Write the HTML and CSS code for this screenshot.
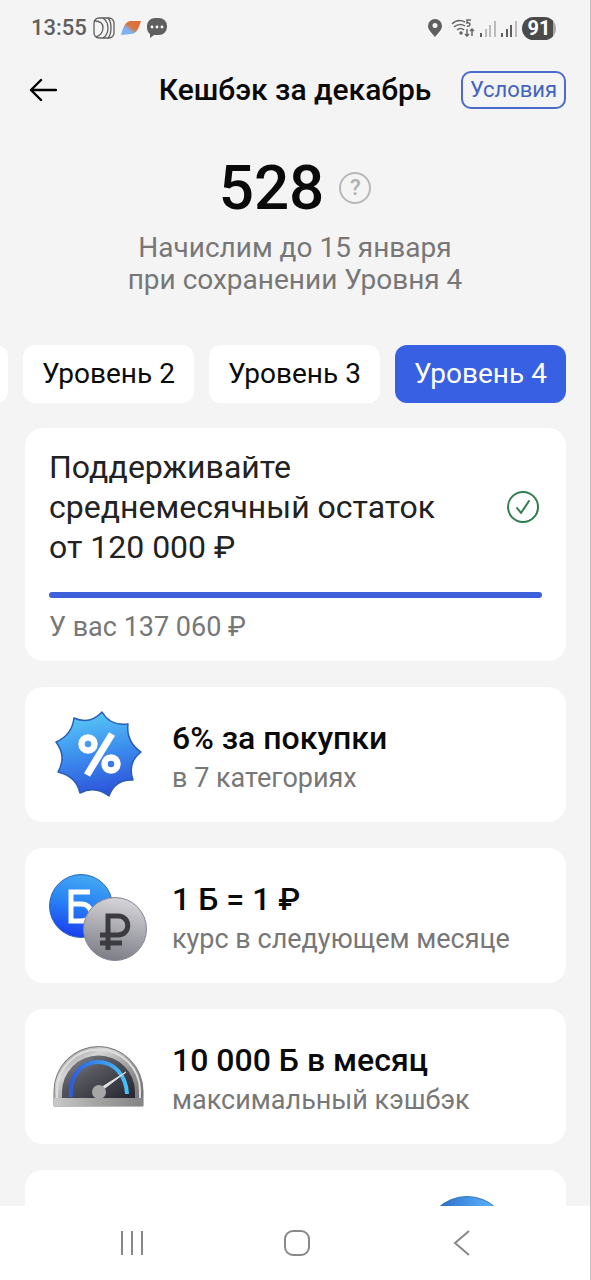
FILE: index.html
```
<!DOCTYPE html>
<html lang="ru">
<head>
    <meta charset="UTF-8">
    <meta name="viewport" content="width=device-width, initial-scale=1.0">
    <title>Кешбэк за декабрь</title>
    <link rel="stylesheet" href="styles.css">
</head>
<body>
    <div class="screen">
        <div class="status-bar">
            <div class="status-group">
                <span class="clock">13:55</span>
                <svg width="22" height="22" viewBox="0 0 22 22" fill="none" stroke="#5f5f5f" stroke-width="1.3">
                    <rect x="1" y="1" width="20" height="20" rx="5"/>
                    <path d="M2 4c6 0 8 3 8 7s-3 8-7 9M10 1c4 3 5 6 5 10s-2 8-5 10M15 1c3 3 3 6 3 10s-1 8-3 10"/>
                </svg>
                <svg width="20" height="14" viewBox="0 0 20 14">
                    <defs>
                        <linearGradient id="leaf" x1="0" y1="1" x2="1" y2="0">
                            <stop offset="0.35" stop-color="#7fb2f5"/>
                            <stop offset="0.55" stop-color="#d9763f"/>
                            <stop offset="1" stop-color="#e0693a"/>
                        </linearGradient>
                    </defs>
                    <path d="M0 14C2 7 4 0 10 0h10c-2 6-4 13-10 13z" fill="url(#leaf)"/>
                </svg>
                <svg width="20" height="20" viewBox="0 0 20 20">
                    <path d="M8 0h4a8 8 0 0 1 8 8v1a8 8 0 0 1-8 8H7l-4 3v-4a8 8 0 0 1-3-7V8a8 8 0 0 1 8-8z" fill="#5f5f5f"/>
                    <g fill="#fff"><circle cx="5" cy="9" r="1.4"/><circle cx="10" cy="9" r="1.4"/><circle cx="15" cy="9" r="1.4"/></g>
                </svg>
            </div>
            <div class="status-group status-right">
                <svg width="14" height="18" viewBox="0 0 14 18">
                    <path fill-rule="evenodd" d="M7 0a7 7 0 0 1 7 7c0 4-4 7-7 11C4 14 0 11 0 7a7 7 0 0 1 7-7zm0 4a2.5 2.5 0 1 0 0 5 2.5 2.5 0 0 0 0-5z" fill="#5f5f5f"/>
                </svg>
                <svg class="wifi" width="24" height="18" viewBox="0 0 24 18" fill="none" stroke="#666" stroke-width="1.5">
                    <path d="M1 5c4-4 9-4 13-2M3 8c3-3 8-3 11-1M6 11c2-2 5-2 7 0"/>
                    <circle cx="10" cy="14" r="1" fill="#666"/>
                    <path d="M20 1h-4v3c4-1 4 4 0 3M16 10v7m-2-2l2 2 2-2M21 17v-7m-2 2l2-2 2 2"/>
                </svg>
                <svg width="16" height="17" viewBox="0 0 16 17">
                    <path d="M0 13h2v4H0z" fill="#5f5f5f"/>
                    <path d="M5 9h2v8H5zM9 5h2v12H9zM14 1h2v16h-2z" fill="#bcbcbc"/>
                </svg>
                <svg width="16" height="17" viewBox="0 0 16 17">
                    <path d="M0 13h2v4H0zM5 9h2v8H5zM9 5h2v12H9z" fill="#5f5f5f"/>
                    <path d="M14 1h2v16h-2z" fill="#bcbcbc"/>
                </svg>
                <span class="battery">91</span>
            </div>
        </div>

        <header class="header">
            <button class="back" aria-label="Назад">
                <svg width="28" height="24" viewBox="0 0 28 24" fill="none" stroke="#000" stroke-width="2.4" stroke-linecap="round" stroke-linejoin="round">
                    <path d="M27 12H2M12 2L2 12l10 10"/>
                </svg>
            </button>
            <h1>Кешбэк за декабрь</h1>
            <button class="terms">Условия</button>
        </header>

        <main>
            <section class="summary">
                <div class="amount">
                    <span class="amount-value">528</span>
                    <button class="help" aria-label="Подробнее">?</button>
                </div>
                <p>Начислим до 15 января<br>при сохранении Уровня 4</p>
            </section>

            <nav class="levels">
                <button aria-label="Уровень 1"></button>
                <button>Уровень 2</button>
                <button>Уровень 3</button>
                <button class="active">Уровень 4</button>
            </nav>

            <div class="cards">
                <section class="card balance">
                    <div class="balance-top">
                        <h2>Поддерживайте среднемесячный остаток от&nbsp;120&nbsp;000&nbsp;₽</h2>
                        <svg width="32" height="32" viewBox="0 0 32 32" fill="none" stroke="#2f7d4f" stroke-width="2" stroke-linecap="round" stroke-linejoin="round">
                            <circle cx="16" cy="16" r="15"/>
                            <path d="M10 17l4 5 8-12"/>
                        </svg>
                    </div>
                    <div class="progress"></div>
                    <p>У вас 137 060 ₽</p>
                </section>

                <section class="card offer">
                    <svg width="98" height="98" viewBox="0 0 98 98">
                        <defs>
                            <linearGradient id="star" x1="0.4" y1="0" x2="0.6" y2="1">
                                <stop offset="0" stop-color="#58c8f6"/>
                                <stop offset="0.5" stop-color="#3b8bee"/>
                                <stop offset="1" stop-color="#2b4fd8"/>
                            </linearGradient>
                        </defs>
                        <path d="M53 6Q61 20 79 18Q77 36 92 46Q78 57 84 74Q66 73 60 90Q46 79 31 87Q27 70 9 66Q18 50 7 36Q23 29 25 12Q41 19 53 6Z" fill="url(#star)" stroke="#2a5db8" stroke-width="1.5" stroke-linejoin="round"/>
                        <g fill="none" stroke="#fff">
                            <circle cx="39" cy="38" r="6.5" stroke-width="6.5"/>
                            <circle cx="62" cy="58" r="6.5" stroke-width="6.5"/>
                            <path d="M63 28L38 69" stroke-width="7"/>
                        </g>
                    </svg>
                    <div>
                        <h3>6% за покупки</h3>
                        <p>в 7 категориях</p>
                    </div>
                </section>

                <section class="card offer">
                    <svg width="98" height="98" viewBox="0 0 98 98">
                        <defs>
                            <linearGradient id="coin-b" x1="0.6" y1="0" x2="0.4" y2="1">
                                <stop offset="0" stop-color="#45a9f2"/>
                                <stop offset="0.5" stop-color="#2680f5"/>
                                <stop offset="1" stop-color="#1a3df0"/>
                            </linearGradient>
                            <linearGradient id="coin-r" x1="0.6" y1="0" x2="0.4" y2="1">
                                <stop offset="0" stop-color="#d6d6da"/>
                                <stop offset="0.5" stop-color="#a9a9b0"/>
                                <stop offset="1" stop-color="#7c7c85"/>
                            </linearGradient>
                        </defs>
                        <circle cx="32" cy="39" r="31.5" fill="url(#coin-b)" stroke="#2f66bb"/>
                        <path d="M41 25H22v29h10c13 0 13-17 0-17H22" fill="none" stroke="#fff" stroke-width="5"/>
                        <circle cx="66" cy="62" r="31.5" fill="url(#coin-r)" stroke="#85859a"/>
                        <path d="M59 83V49h10c13 0 13 19 0 19H51M51 76h22" fill="none" stroke="#3c3c40" stroke-width="5"/>
                    </svg>
                    <div>
                        <h3>1 Б = 1 ₽</h3>
                        <p>курс в следующем месяце</p>
                    </div>
                </section>

                <section class="card offer">
                    <svg width="98" height="98" viewBox="0 0 98 98">
                        <defs>
                            <linearGradient id="metal" x1="0" y1="0" x2="1" y2="1">
                                <stop offset="0" stop-color="#777"/>
                                <stop offset="0.3" stop-color="#d5d5d5"/>
                                <stop offset="0.6" stop-color="#9a9a9a"/>
                                <stop offset="1" stop-color="#6c6c6c"/>
                            </linearGradient>
                            <linearGradient id="base" x1="0" y1="0" x2="1" y2="0">
                                <stop offset="0" stop-color="#c9c9c9"/>
                                <stop offset="0.5" stop-color="#a2a2a2"/>
                                <stop offset="1" stop-color="#848484"/>
                            </linearGradient>
                            <linearGradient id="dial" x1="0" y1="0" x2="1" y2="1">
                                <stop offset="0" stop-color="#8b8b94"/>
                                <stop offset="0.4" stop-color="#56565f"/>
                                <stop offset="1" stop-color="#24242c"/>
                            </linearGradient>
                            <linearGradient id="arc" x1="0" y1="0" x2="1" y2="0">
                                <stop offset="0" stop-color="#2c5de0"/>
                                <stop offset="1" stop-color="#45c2fb"/>
                            </linearGradient>
                        </defs>
                        <path d="M5 78V63a44 44 0 0 1 89 0v15z" fill="url(#metal)" stroke="#777"/>
                        <path d="M8 70v-7a41 41 0 0 1 83 0v7" fill="none" stroke="#dedede" stroke-width="2"/>
                        <path d="M13 70v-6a36 36 0 0 1 73 0v6z" fill="url(#dial)"/>
                        <path d="M22 69c-2-22 11-35 27-35s28 13 29 32" fill="none" stroke="url(#arc)" stroke-width="4"/>
                        <path d="M50 61l27-17-25 19z" fill="#e4e4e4" stroke="#e4e4e4"/>
                        <circle cx="50" cy="64" r="7" fill="#a6a6a6"/>
                        <path d="M5 70h89v8H5z" fill="url(#base)"/>
                    </svg>
                    <div>
                        <h3>10 000 Б в месяц</h3>
                        <p>максимальный кэшбэк</p>
                    </div>
                </section>

                <section class="card teaser">
                    <svg width="86" height="86" viewBox="0 0 86 86">
                        <defs>
                            <linearGradient id="globe" x1="0" y1="0" x2="1" y2="0">
                                <stop offset="0.2" stop-color="#2f6fca"/>
                                <stop offset="0.6" stop-color="#4c9fee"/>
                                <stop offset="0.9" stop-color="#58b4f2"/>
                            </linearGradient>
                        </defs>
                        <circle cx="43" cy="43" r="42.5" fill="url(#globe)" stroke="#3378b8"/>
                    </svg>
                </section>
            </div>
        </main>

        <nav class="system-nav">
            <button aria-label="Недавние">
                <svg width="24" height="26" viewBox="0 0 24 26" fill="none" stroke="#888" stroke-width="2">
                    <path d="M2 1v24M12 1v24M22 1v24"/>
                </svg>
            </button>
            <button aria-label="Домой">
                <svg width="26" height="26" viewBox="0 0 26 26" fill="none" stroke="#888" stroke-width="2">
                    <rect x="1" y="1" width="24" height="24" rx="8"/>
                </svg>
            </button>
            <button aria-label="Назад">
                <svg width="26" height="26" viewBox="0 0 26 26" fill="none" stroke="#888" stroke-width="2">
                    <path d="M20 1L6 13l14 12"/>
                </svg>
            </button>
        </nav>
    </div>
</body>
</html>
```
FILE: styles.css
```
* {
    box-sizing: border-box;
}
body {
    margin: 0;
    font-family: Roboto, "Noto Sans", sans-serif;
    font-size: 28px;
    line-height: 32px;
    color: #0a0a0a;
    background: #f4f4f4;
}
h1, h2, h3, p {
    margin: 0;
}
h1, h3 {
    font-weight: 500;
}
button {
    padding: 0;
    border: none;
    background: none;
    color: inherit;
    font: inherit;
    cursor: pointer;
}
svg {
    display: block;
    flex-shrink: 0;
}
.screen {
    display: flex;
    flex-direction: column;
    height: 100vh;
    border-right: 1px solid #c4c4c4;
}

/* status bar */
.status-bar {
    display: flex;
    justify-content: space-between;
    align-items: center;
    height: 56px;
    padding: 0 34px 0 31px;
}
.status-group {
    display: flex;
    align-items: center;
    gap: 6px;
}
.status-right {
    gap: 5px;
}
.clock {
    font-size: 22px;
    font-weight: 500;
    color: #5f5f5f;
}
.wifi {
    margin-left: 4px;
}
.battery {
    width: 34px;
    border-radius: 12px;
    background: linear-gradient(90deg, #4a4a4a 91%, #aaa 91%);
    color: #fff;
    font-size: 20px;
    font-weight: 700;
    line-height: 23px;
    text-align: center;
}

/* header */
.header {
    display: grid;
    grid-template-columns: 1fr auto 1fr;
    align-items: center;
    height: 68px;
    padding: 0 24px;
}
.header h1 {
    font-size: 30px;
}
.back {
    justify-self: start;
    padding-left: 5px;
}
.terms {
    justify-self: end;
    width: 105px;
    height: 38px;
    border: 2px solid #4a6bcb;
    border-radius: 10px;
    color: #4463bd;
    font-size: 22px;
}

main {
    flex: 1;
    min-height: 0;
    overflow-y: auto;
    scrollbar-width: none;
}
.summary {
    padding: 28px 24px 0;
    text-align: center;
    color: #777;
}
.amount {
    display: flex;
    justify-content: center;
    align-items: center;
    gap: 15px;
    margin-bottom: 8px;
}
.amount-value {
    color: #0a0a0a;
    font-size: 62px;
    font-weight: 500;
    line-height: 72px;
}
.help {
    width: 32px;
    height: 32px;
    border: 2px solid #b8b8b8;
    border-radius: 50%;
    color: #b0b0b0;
    font-size: 22px;
    font-weight: 500;
    line-height: 28px;
}

/* level tabs */
.levels {
    display: flex;
    justify-content: flex-end;
    gap: 15px;
    margin: 49px 0 25px;
    padding-right: 24px;
    overflow: hidden;
}
.levels button {
    flex: none;
    width: 171px;
    height: 58px;
    border-radius: 12px;
    background: #fff;
}
.levels .active {
    background: #3860e2;
    color: #fff;
}

/* cards */
.cards {
    display: flex;
    flex-direction: column;
    gap: 26px;
    padding: 0 24px 26px 25px;
}
.card {
    border-radius: 18px;
    background: #fff;
}
.card p {
    color: #777;
    font-size: 27px;
}
.balance {
    padding: 19px 24px 18px;
}
.balance-top {
    display: flex;
    justify-content: space-between;
    align-items: center;
    padding-right: 3px;
}
.balance h2 {
    max-width: 400px;
    color: #222;
    font-size: 32px;
    font-weight: 400;
    line-height: 40px;
}
.progress {
    height: 6px;
    margin: 25px 0 13px;
    border-radius: 3px;
    background: #3c61d8;
}
.offer {
    display: flex;
    align-items: center;
    gap: 25px;
    height: 135px;
    padding: 0 24px;
}
.offer h3 {
    padding-top: 6px;
    font-size: 32px;
    line-height: 40px;
}
.offer p {
    line-height: 40px;
}
.teaser {
    display: flex;
    justify-content: flex-end;
    padding: 26px 56px 26px 24px;
}

/* android buttons */
.system-nav {
    display: flex;
    justify-content: space-between;
    align-items: center;
    height: 74px;
    padding: 0 115px 0 120px;
    background: #fff;
}
```
